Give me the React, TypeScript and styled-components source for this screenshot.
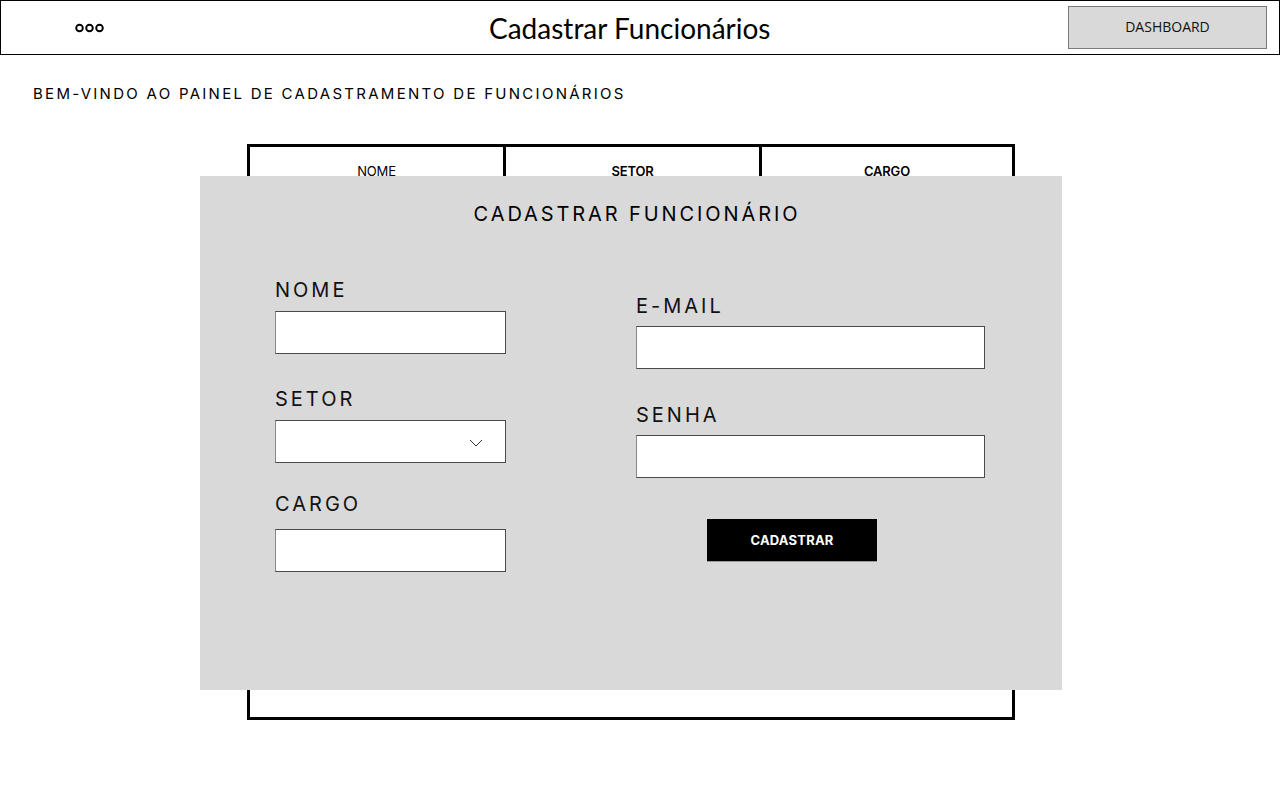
import React from "react";
import styled, { createGlobalStyle } from "styled-components";

const GlobalStyle = createGlobalStyle`
  html, body { margin: 0; padding: 0; background: #ffffff; }
  body { font-family: Inter, "Noto Sans", sans-serif; color: #000; }
  * { box-sizing: border-box; }
`;

const Header = styled.header`
  height: 55px;
  border: 1px solid #000;
  display: flex;
  align-items: center;
  padding: 0 12px 0 74px;
`;

const Dots = styled.svg`
  display: block;
  width: 30px;
  height: 10px;
`;

const Title = styled.h1`
  margin: 0 0 0 384px;
  font-family: Lato, "Open Sans", sans-serif;
  font-weight: 400;
  font-size: 28px;
  line-height: 30px;
  letter-spacing: 0;
  white-space: nowrap;
`;

const DashButton = styled.button`
  margin-left: auto;
  margin-top: -1px;
  width: 199px;
  height: 43px;
  background: #d9d9d9;
  border: 1px solid #7a7a7a;
  font-family: "Open Sans", sans-serif;
  font-size: 14px;
  color: #111;
  padding: 0 0 2px;
  cursor: pointer;
`;

const Welcome = styled.p`
  margin: 29px 0 0 33px;
  font-family: Inter, sans-serif;
  font-size: 15px;
  line-height: 20px;
  letter-spacing: 2.28px;
  white-space: nowrap;
`;

const Stage = styled.main`
  position: relative;
  margin: 40px 0 0 200px;
  width: 862px;
`;

const Table = styled.div`
  margin-left: 47px;
  width: 768px;
  height: 576px;
  border: 3px solid #000;
  display: flex;
  flex-direction: column;
`;

const HeadRow = styled.div`
  display: grid;
  grid-template-columns: 253px 256px 1fr;
  height: 54px;
  border-bottom: 3px solid #000;
`;

const HeadCell = styled.div<{ $bold?: boolean }>`
  display: flex;
  align-items: center;
  justify-content: center;
  padding-bottom: 3px;
  font-family: Inter, sans-serif;
  font-size: 13px;
  font-weight: ${(p) => (p.$bold ? 600 : 400)};
  letter-spacing: -0.2px;
  & + & { border-left: 3px solid #000; }
`;

const Modal = styled.section`
  position: absolute;
  top: 32px;
  left: 0;
  width: 862px;
  height: 514px;
  background: #d9d9d9;
  padding-top: 24px;
`;

const ModalTitle = styled.h2`
  margin: 0;
  padding-left: 12px;
  text-align: center;
  font-family: Inter, sans-serif;
  font-weight: 400;
  font-size: 20px;
  line-height: 28px;
  letter-spacing: 2.9px;
`;

const Columns = styled.div`
  display: flex;
  align-items: flex-start;
  margin-top: 49px;
`;

const Column = styled.div<{ $left: number; $width: number; $top?: number }>`
  display: flex;
  flex-direction: column;
  margin-left: ${(p) => p.$left}px;
  width: ${(p) => p.$width}px;
  padding-top: ${(p) => p.$top ?? 0}px;
`;

const Field = styled.label<{ $mt?: number; $gap: number }>`
  display: flex;
  flex-direction: column;
  gap: ${(p) => p.$gap}px;
  margin-top: ${(p) => p.$mt ?? 0}px;
`;

const LabelText = styled.span`
  font-family: Inter, sans-serif;
  font-size: 20px;
  line-height: 26px;
  letter-spacing: 3px;
  color: #111;
`;

const Input = styled.input`
  display: block;
  width: 100%;
  height: 43px;
  background: #fff;
  border: 1px solid #4a4a4a;
  border-left-color: #888;
  outline: none;
  font-size: 14px;
  padding: 0 10px;
`;

const SelectBox = styled.div`
  position: relative;
  height: 43px;
  background: #fff;
  border: 1px solid #4a4a4a;
  border-left-color: #888;
  display: flex;
  align-items: center;
  justify-content: flex-end;
  padding-right: 22px;
`;

const Chevron = styled.svg`
  display: block;
  width: 14px;
  height: 8px;
  margin-top: 3px;
`;

const SubmitButton = styled.button`
  margin: 41px 0 0 71px;
  width: 170px;
  height: 43px;
  background: #000;
  color: #fff;
  border: none;
  border-bottom: 1px solid #9a9a9a;
  font-family: Inter, sans-serif;
  font-weight: 700;
  font-size: 13px;
  letter-spacing: 0.2px;
  cursor: pointer;
`;

export default function App() {
  return (
    <>
      <GlobalStyle />
      <Header>
        <Dots viewBox="0 0 30 10">
          {[4.5, 14.5, 24.5].map((cx) => (
            <circle key={cx} cx={cx} cy={5} r={3.3} fill="none" stroke="#000" strokeWidth={1.9} />
          ))}
        </Dots>
        <Title>Cadastrar Funcionários</Title>
        <DashButton>DASHBOARD</DashButton>
      </Header>

      <Welcome>BEM-VINDO AO PAINEL DE CADASTRAMENTO DE FUNCIONÁRIOS</Welcome>

      <Stage>
        <Table>
          <HeadRow>
            <HeadCell>NOME</HeadCell>
            <HeadCell $bold>SETOR</HeadCell>
            <HeadCell $bold>CARGO</HeadCell>
          </HeadRow>
        </Table>

        <Modal>
          <ModalTitle>CADASTRAR FUNCIONÁRIO</ModalTitle>
          <Columns>
            <Column $left={75} $width={231}>
              <Field $gap={8}>
                <LabelText>NOME</LabelText>
                <Input type="text" />
              </Field>
              <Field $mt={32} $gap={8}>
                <LabelText>SETOR</LabelText>
                <SelectBox>
                  <Chevron viewBox="0 0 14 8">
                    <polyline points="1,1 7,7 13,1" fill="none" stroke="#333" strokeWidth={1} />
                  </Chevron>
                </SelectBox>
              </Field>
              <Field $mt={28} $gap={12}>
                <LabelText>CARGO</LabelText>
                <Input type="text" />
              </Field>
            </Column>
            <Column $left={130} $width={349} $top={16}>
              <Field $gap={7}>
                <LabelText>E-MAIL</LabelText>
                <Input type="email" />
              </Field>
              <Field $mt={33} $gap={7}>
                <LabelText>SENHA</LabelText>
                <Input type="password" />
              </Field>
              <SubmitButton>CADASTRAR</SubmitButton>
            </Column>
          </Columns>
        </Modal>
      </Stage>
    </>
  );
}
